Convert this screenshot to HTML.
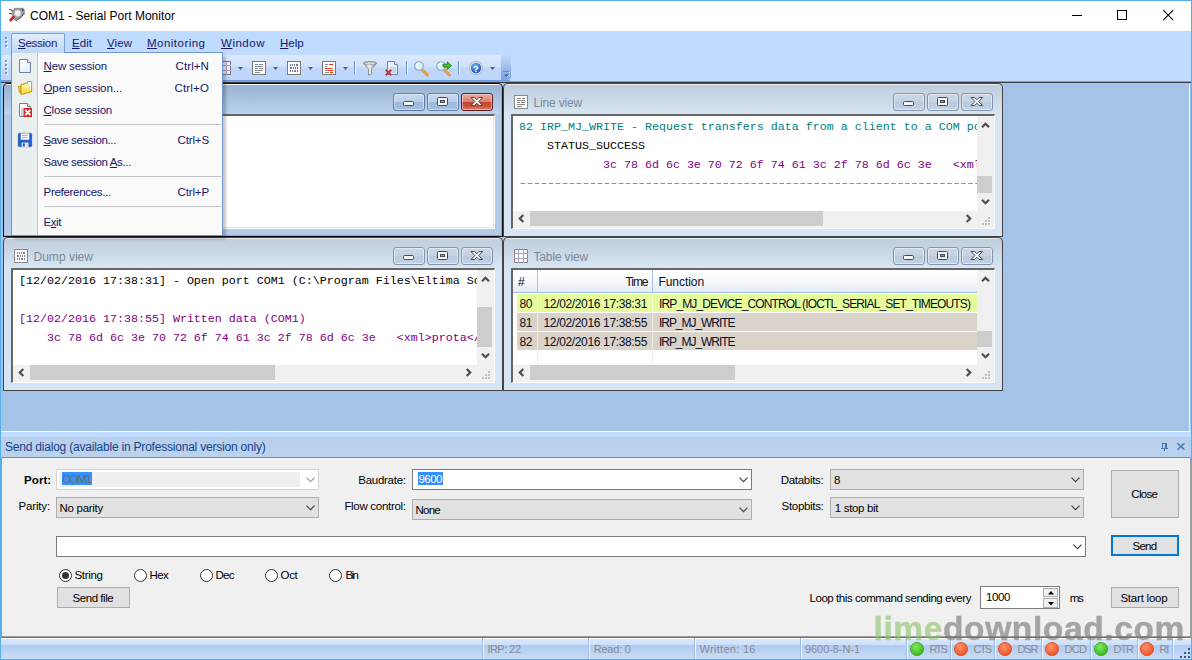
<!DOCTYPE html><html><head><meta charset="utf-8"><title>COM1 - Serial Port Monitor</title><style>
*{box-sizing:border-box;margin:0;padding:0}
html,body{width:1192px;height:660px;overflow:hidden;background:#fff}
body{position:relative;font-family:"Liberation Sans","DejaVu Sans",sans-serif;font-size:12px;color:#000}
.a{position:absolute}
.t{position:absolute;white-space:pre;line-height:16px;height:16px}
.m{position:absolute;white-space:pre;font-family:"Liberation Mono","DejaVu Sans Mono",monospace;font-size:11.67px;line-height:16px;height:16px}
u{text-decoration:underline;text-underline-offset:1px}
svg{position:absolute;overflow:visible}
</style></head><body>
<div class="a" style="left:0px;top:0px;width:1192px;height:660px;background:#56aeea"></div>
<div class="a" style="left:1px;top:1px;width:1190px;height:30px;background:#fff"></div>
<div class="t" style="left:30px;top:7.5px;letter-spacing:0.011px;">COM1 - Serial Port Monitor</div>
<svg style="left:1060px;top:1px" width="131" height="30" viewBox="0 0 131 30" ><g stroke="#000" stroke-width="1" fill="none" shape-rendering="crispEdges"><path d="M12 14.5h10"/><rect x="57.5" y="9.5" width="9" height="9"/></g><path d="M103.200 9.200l10 10M113.200 9.200l-10 10" stroke="#000" stroke-width="1.100" fill="none"/></svg>
<div class="a" style="left:1px;top:31px;width:1190px;height:51px;background:#bfdbff"></div>
<div class="a" style="left:1px;top:81px;width:1190px;height:351px;background:#a5c2e9"></div>
<div class="a" style="left:1px;top:81px;width:1190px;height:1px;background:#9b9b9b"></div>
<div class="a" style="left:1px;top:82px;width:1190px;height:1px;background:#3d3d3d"></div>
<div class="a" style="left:1px;top:432px;width:1190px;height:5px;background:#cfe2fb"></div>
<div class="a" style="left:1px;top:437px;width:1190px;height:20px;background:#b9d1ee"></div>
<div class="a" style="left:1px;top:457px;width:1190px;height:180px;background:#f0f0f0;border-top:1px solid #8a8a8a"></div>
<div class="a" style="left:1px;top:637px;width:1190px;height:22px;background:linear-gradient(#d7e6f9,#c3d9f7 45%,#afcaee 50%,#c6dcf8)"></div>
<div class="a" style="left:6px;top:38px;width:2px;height:2px;background:#fff;opacity:.85"></div>
<div class="a" style="left:5px;top:37px;width:2px;height:2px;background:#6a97d6"></div>
<div class="a" style="left:6px;top:42px;width:2px;height:2px;background:#fff;opacity:.85"></div>
<div class="a" style="left:5px;top:41px;width:2px;height:2px;background:#6a97d6"></div>
<div class="a" style="left:6px;top:46px;width:2px;height:2px;background:#fff;opacity:.85"></div>
<div class="a" style="left:5px;top:45px;width:2px;height:2px;background:#6a97d6"></div>
<div class="a" style="left:11px;top:33px;width:54px;height:20px;border:1px solid #7b9fd3;border-bottom:none;border-radius:2px 2px 0 0;background:linear-gradient(#e3eefb,#bcd6f7)"></div>
<div class="t" style="left:18px;top:34.75px;font-size:11.5px;letter-spacing:-0.275px;color:#15186a;"><u>S</u>ession</div>
<div class="t" style="left:72px;top:34.75px;font-size:11.5px;letter-spacing:0.043px;color:#15186a;"><u>E</u>dit</div>
<div class="t" style="left:107px;top:34.75px;font-size:11.5px;letter-spacing:0.070px;color:#15186a;"><u>V</u>iew</div>
<div class="t" style="left:147px;top:34.75px;font-size:11.5px;letter-spacing:0.480px;color:#15186a;"><u>M</u>onitoring</div>
<div class="t" style="left:221px;top:34.75px;font-size:11.5px;letter-spacing:0.516px;color:#15186a;"><u>W</u>indow</div>
<div class="t" style="left:280px;top:34.75px;font-size:11.5px;letter-spacing:-0.039px;color:#15186a;"><u>H</u>elp</div>
<div class="a" style="left:3px;top:83px;width:500px;height:154px;background:#0d0d0d;border-radius:5px 5px 0 0"></div>
<div class="a" style="left:4px;top:84px;width:498px;height:152px;border-radius:4px 4px 0 0;background:linear-gradient(#fff 0,#fff 1px,#98b2d2 1px,#b9d3ef 30px,#b3cbe9 30px)"></div>
<div class="a" style="left:11px;top:114px;width:484px;height:115px;background:#f0f0f0;border-top:2px solid #666;border-left:2px solid #666;border-right:1px solid #fff;border-bottom:1px solid #fff"></div>
<div class="a" style="left:13px;top:116px;width:464px;height:95px;background:#fff"></div>
<div class="a" style="left:393px;top:93px;width:32px;height:18px;border:1px solid #5f7da6;border-radius:3px;background:linear-gradient(#c6d9ef 0,#bacfe9 47%,#9cb7d8 50%,#a4bfdf 100%);box-shadow:inset 0 0 0 1px rgba(255,255,255,.45)"></div>
<svg style="left:393px;top:93px" width="32" height="18" viewBox="0 0 32 18" ><rect x="10.5" y="8.5" width="10" height="4" rx="1" fill="#f4f4f4" stroke="#474a59" stroke-width="1"/></svg>
<div class="a" style="left:427px;top:93px;width:32px;height:18px;border:1px solid #5f7da6;border-radius:3px;background:linear-gradient(#c6d9ef 0,#bacfe9 47%,#9cb7d8 50%,#a4bfdf 100%);box-shadow:inset 0 0 0 1px rgba(255,255,255,.45)"></div>
<svg style="left:427px;top:93px" width="32" height="18" viewBox="0 0 32 18" ><rect x="10.5" y="4.5" width="10" height="8" rx="1" fill="#f4f4f4" stroke="#474a59" stroke-width="1"/><rect x="13.5" y="7.5" width="4" height="2" fill="#8aa0c0" stroke="#474a59" stroke-width="1"/></svg>
<div class="a" style="left:461px;top:93px;width:32px;height:18px;border:1px solid #5c1c26;border-radius:3px;background:linear-gradient(#eba99c 0,#dd8371 47%,#c3422b 50%,#c8513a 75%,#dc8370 100%);box-shadow:inset 0 0 0 1px rgba(255,255,255,.45)"></div>
<svg style="left:461px;top:93px" width="32" height="18" viewBox="0 0 32 18" ><path d="M10 4.500h3.600l2.200 2.300 2.200-2.300h3.600l-3.900 4 3.900 4h-3.600l-2.200-2.300-2.200 2.300h-3.600l3.900-4z" fill="#f4f4f4" stroke="#474a59" stroke-width="1" stroke-linejoin="round"/></svg>
<div class="a" style="left:13px;top:116px;width:481px;height:112px;background:#fff;border-right:1px solid #e3e3e3;border-bottom:1px solid #e3e3e3"></div>
<div class="a" style="left:4px;top:235px;width:498px;height:1px;background:#35d3ea"></div>
<div class="a" style="left:501px;top:91px;width:1px;height:145px;background:#35d3ea"></div>
<div class="a" style="left:503px;top:83px;width:500px;height:154px;background:#454545;border-radius:5px 5px 0 0"></div>
<div class="a" style="left:504px;top:84px;width:498px;height:152px;border-radius:4px 4px 0 0;background:linear-gradient(#e9eff8 0,#e9eff8 1px,#bfcddc 1px,#d8e5f3 30px,#d7e4f3 30px)"></div>
<div class="a" style="left:511px;top:114px;width:484px;height:115px;background:#f0f0f0;border-top:2px solid #666;border-left:2px solid #666;border-right:1px solid #fff;border-bottom:1px solid #fff"></div>
<div class="a" style="left:513px;top:116px;width:464px;height:95px;background:#fff"></div>
<svg style="left:514px;top:95px" width="14" height="14" viewBox="0 0 14 14"><rect x=".5" y=".5" width="13" height="13" fill="#fdfdfd" stroke="#8a8a8a"/><path d="M3 3.5h4M8 3.5h3M3 5.5h8M3 7.5h3M7 7.5h4M3 9.5h8M3 11.5h5" stroke="#8b8b8b" stroke-width="1" shape-rendering="crispEdges"/></svg>
<div class="t" style="left:533.5px;top:95px;letter-spacing:-0.170px;color:#7c8899;">Line view</div>
<div class="a" style="left:893px;top:93px;width:32px;height:18px;border:1px solid #8495b0;border-radius:3px;background:linear-gradient(#ccd8e7 0,#c5d2e3 47%,#b9c8dc 50%,#c4d2e4 100%);box-shadow:inset 0 0 0 1px rgba(255,255,255,.45)"></div>
<svg style="left:893px;top:93px" width="32" height="18" viewBox="0 0 32 18" ><rect x="10.5" y="8.5" width="10" height="4" rx="1" fill="#f4f4f4" stroke="#474a59" stroke-width="1"/></svg>
<div class="a" style="left:927px;top:93px;width:32px;height:18px;border:1px solid #8495b0;border-radius:3px;background:linear-gradient(#ccd8e7 0,#c5d2e3 47%,#b9c8dc 50%,#c4d2e4 100%);box-shadow:inset 0 0 0 1px rgba(255,255,255,.45)"></div>
<svg style="left:927px;top:93px" width="32" height="18" viewBox="0 0 32 18" ><rect x="10.5" y="4.5" width="10" height="8" rx="1" fill="#f4f4f4" stroke="#474a59" stroke-width="1"/><rect x="13.5" y="7.5" width="4" height="2" fill="#8aa0c0" stroke="#474a59" stroke-width="1"/></svg>
<div class="a" style="left:961px;top:93px;width:32px;height:18px;border:1px solid #8495b0;border-radius:3px;background:linear-gradient(#ccd8e7 0,#c5d2e3 47%,#b9c8dc 50%,#c4d2e4 100%);box-shadow:inset 0 0 0 1px rgba(255,255,255,.45)"></div>
<svg style="left:961px;top:93px" width="32" height="18" viewBox="0 0 32 18" ><path d="M10 4.500h3.600l2.200 2.300 2.200-2.300h3.600l-3.900 4 3.900 4h-3.600l-2.200-2.300-2.200 2.300h-3.600l3.900-4z" fill="#f4f4f4" stroke="#474a59" stroke-width="1" stroke-linejoin="round"/></svg>
<svg style="left:976.5px;top:117px" width="17" height="17" viewBox="0 0 17 17" ><path d="M5 10.300l3.500-3.500 3.500 3.500" fill="none" stroke="#4d4d4d" stroke-width="2.200"/></svg>
<svg style="left:976.5px;top:193px" width="17" height="17" viewBox="0 0 17 17" ><path d="M5 6.700l3.500 3.500 3.500-3.500" fill="none" stroke="#4d4d4d" stroke-width="2.200"/></svg>
<svg style="left:512.5px;top:210px" width="17" height="17" viewBox="0 0 17 17" ><path d="M10.300 5l-3.500 3.500 3.500 3.500" fill="none" stroke="#4d4d4d" stroke-width="2.200"/></svg>
<svg style="left:959.5px;top:210px" width="17" height="17" viewBox="0 0 17 17" ><path d="M6.700 5l3.500 3.500-3.500 3.500" fill="none" stroke="#4d4d4d" stroke-width="2.200"/></svg>
<div class="a" style="left:988px;top:217px;width:2px;height:2px;background:#bfbfbf"></div>
<div class="a" style="left:985px;top:220px;width:2px;height:2px;background:#bfbfbf"></div>
<div class="a" style="left:988px;top:220px;width:2px;height:2px;background:#bfbfbf"></div>
<div class="a" style="left:982px;top:223px;width:2px;height:2px;background:#bfbfbf"></div>
<div class="a" style="left:985px;top:223px;width:2px;height:2px;background:#bfbfbf"></div>
<div class="a" style="left:988px;top:223px;width:2px;height:2px;background:#bfbfbf"></div>
<div class="a" style="left:3px;top:237px;width:500px;height:154px;background:#454545;border-radius:5px 5px 0 0"></div>
<div class="a" style="left:4px;top:238px;width:498px;height:152px;border-radius:4px 4px 0 0;background:linear-gradient(#e9eff8 0,#e9eff8 1px,#bfcddc 1px,#d8e5f3 30px,#d7e4f3 30px)"></div>
<div class="a" style="left:11px;top:268px;width:484px;height:115px;background:#f0f0f0;border-top:2px solid #666;border-left:2px solid #666;border-right:1px solid #fff;border-bottom:1px solid #fff"></div>
<div class="a" style="left:13px;top:270px;width:464px;height:95px;background:#fff"></div>
<svg style="left:14px;top:249px" width="14" height="14" viewBox="0 0 14 14"><rect x=".5" y=".5" width="13" height="13" fill="#fdfdfd" stroke="#8a8a8a"/><path d="M3 3.5h1M5 3.5h1M7 3.5h1M9 3.5h2M3 6.5h2M6 6.5h1M8 6.5h1M10 6.5h1M3 9.5h1M5 9.5h1M7 9.5h2M10 9.5h1" stroke="#7d8794" stroke-width="2" shape-rendering="crispEdges"/></svg>
<div class="t" style="left:33.5px;top:249px;letter-spacing:0.016px;color:#7c8899;">Dump view</div>
<div class="a" style="left:393px;top:247px;width:32px;height:18px;border:1px solid #8495b0;border-radius:3px;background:linear-gradient(#ccd8e7 0,#c5d2e3 47%,#b9c8dc 50%,#c4d2e4 100%);box-shadow:inset 0 0 0 1px rgba(255,255,255,.45)"></div>
<svg style="left:393px;top:247px" width="32" height="18" viewBox="0 0 32 18" ><rect x="10.5" y="8.5" width="10" height="4" rx="1" fill="#f4f4f4" stroke="#474a59" stroke-width="1"/></svg>
<div class="a" style="left:427px;top:247px;width:32px;height:18px;border:1px solid #8495b0;border-radius:3px;background:linear-gradient(#ccd8e7 0,#c5d2e3 47%,#b9c8dc 50%,#c4d2e4 100%);box-shadow:inset 0 0 0 1px rgba(255,255,255,.45)"></div>
<svg style="left:427px;top:247px" width="32" height="18" viewBox="0 0 32 18" ><rect x="10.5" y="4.5" width="10" height="8" rx="1" fill="#f4f4f4" stroke="#474a59" stroke-width="1"/><rect x="13.5" y="7.5" width="4" height="2" fill="#8aa0c0" stroke="#474a59" stroke-width="1"/></svg>
<div class="a" style="left:461px;top:247px;width:32px;height:18px;border:1px solid #8495b0;border-radius:3px;background:linear-gradient(#ccd8e7 0,#c5d2e3 47%,#b9c8dc 50%,#c4d2e4 100%);box-shadow:inset 0 0 0 1px rgba(255,255,255,.45)"></div>
<svg style="left:461px;top:247px" width="32" height="18" viewBox="0 0 32 18" ><path d="M10 4.500h3.600l2.200 2.300 2.200-2.300h3.600l-3.900 4 3.900 4h-3.600l-2.200-2.300-2.200 2.300h-3.600l3.900-4z" fill="#f4f4f4" stroke="#474a59" stroke-width="1" stroke-linejoin="round"/></svg>
<svg style="left:476.5px;top:271px" width="17" height="17" viewBox="0 0 17 17" ><path d="M5 10.300l3.500-3.500 3.500 3.500" fill="none" stroke="#4d4d4d" stroke-width="2.200"/></svg>
<svg style="left:476.5px;top:347px" width="17" height="17" viewBox="0 0 17 17" ><path d="M5 6.700l3.500 3.500 3.500-3.500" fill="none" stroke="#4d4d4d" stroke-width="2.200"/></svg>
<svg style="left:12.5px;top:364px" width="17" height="17" viewBox="0 0 17 17" ><path d="M10.300 5l-3.500 3.500 3.500 3.500" fill="none" stroke="#4d4d4d" stroke-width="2.200"/></svg>
<svg style="left:459.5px;top:364px" width="17" height="17" viewBox="0 0 17 17" ><path d="M6.700 5l3.500 3.500-3.500 3.500" fill="none" stroke="#4d4d4d" stroke-width="2.200"/></svg>
<div class="a" style="left:488px;top:371px;width:2px;height:2px;background:#bfbfbf"></div>
<div class="a" style="left:485px;top:374px;width:2px;height:2px;background:#bfbfbf"></div>
<div class="a" style="left:488px;top:374px;width:2px;height:2px;background:#bfbfbf"></div>
<div class="a" style="left:482px;top:377px;width:2px;height:2px;background:#bfbfbf"></div>
<div class="a" style="left:485px;top:377px;width:2px;height:2px;background:#bfbfbf"></div>
<div class="a" style="left:488px;top:377px;width:2px;height:2px;background:#bfbfbf"></div>
<div class="a" style="left:503px;top:237px;width:500px;height:154px;background:#454545;border-radius:5px 5px 0 0"></div>
<div class="a" style="left:504px;top:238px;width:498px;height:152px;border-radius:4px 4px 0 0;background:linear-gradient(#e9eff8 0,#e9eff8 1px,#bfcddc 1px,#d8e5f3 30px,#d7e4f3 30px)"></div>
<div class="a" style="left:511px;top:268px;width:484px;height:115px;background:#f0f0f0;border-top:2px solid #666;border-left:2px solid #666;border-right:1px solid #fff;border-bottom:1px solid #fff"></div>
<div class="a" style="left:513px;top:270px;width:464px;height:95px;background:#fff"></div>
<svg style="left:514px;top:249px" width="14" height="14" viewBox="0 0 14 14"><rect x=".5" y=".5" width="13" height="13" fill="#fbfbfd" stroke="#8a8a8a"/><path d="M.5 4.5h13M.5 9.5h13M4.5 .5v13M9.5 .5v13" stroke="#a9a0c6" stroke-width="1" shape-rendering="crispEdges"/></svg>
<div class="t" style="left:533.5px;top:249px;letter-spacing:-0.153px;color:#7c8899;">Table view</div>
<div class="a" style="left:893px;top:247px;width:32px;height:18px;border:1px solid #8495b0;border-radius:3px;background:linear-gradient(#ccd8e7 0,#c5d2e3 47%,#b9c8dc 50%,#c4d2e4 100%);box-shadow:inset 0 0 0 1px rgba(255,255,255,.45)"></div>
<svg style="left:893px;top:247px" width="32" height="18" viewBox="0 0 32 18" ><rect x="10.5" y="8.5" width="10" height="4" rx="1" fill="#f4f4f4" stroke="#474a59" stroke-width="1"/></svg>
<div class="a" style="left:927px;top:247px;width:32px;height:18px;border:1px solid #8495b0;border-radius:3px;background:linear-gradient(#ccd8e7 0,#c5d2e3 47%,#b9c8dc 50%,#c4d2e4 100%);box-shadow:inset 0 0 0 1px rgba(255,255,255,.45)"></div>
<svg style="left:927px;top:247px" width="32" height="18" viewBox="0 0 32 18" ><rect x="10.5" y="4.5" width="10" height="8" rx="1" fill="#f4f4f4" stroke="#474a59" stroke-width="1"/><rect x="13.5" y="7.5" width="4" height="2" fill="#8aa0c0" stroke="#474a59" stroke-width="1"/></svg>
<div class="a" style="left:961px;top:247px;width:32px;height:18px;border:1px solid #8495b0;border-radius:3px;background:linear-gradient(#ccd8e7 0,#c5d2e3 47%,#b9c8dc 50%,#c4d2e4 100%);box-shadow:inset 0 0 0 1px rgba(255,255,255,.45)"></div>
<svg style="left:961px;top:247px" width="32" height="18" viewBox="0 0 32 18" ><path d="M10 4.500h3.600l2.200 2.300 2.200-2.300h3.600l-3.900 4 3.900 4h-3.600l-2.200-2.300-2.200 2.300h-3.600l3.900-4z" fill="#f4f4f4" stroke="#474a59" stroke-width="1" stroke-linejoin="round"/></svg>
<svg style="left:976.5px;top:271px" width="17" height="17" viewBox="0 0 17 17" ><path d="M5 10.300l3.500-3.500 3.500 3.500" fill="none" stroke="#4d4d4d" stroke-width="2.200"/></svg>
<svg style="left:976.5px;top:347px" width="17" height="17" viewBox="0 0 17 17" ><path d="M5 6.700l3.500 3.500 3.500-3.500" fill="none" stroke="#4d4d4d" stroke-width="2.200"/></svg>
<svg style="left:512.5px;top:364px" width="17" height="17" viewBox="0 0 17 17" ><path d="M10.300 5l-3.500 3.500 3.500 3.500" fill="none" stroke="#4d4d4d" stroke-width="2.200"/></svg>
<svg style="left:959.5px;top:364px" width="17" height="17" viewBox="0 0 17 17" ><path d="M6.700 5l3.500 3.500-3.500 3.500" fill="none" stroke="#4d4d4d" stroke-width="2.200"/></svg>
<div class="a" style="left:988px;top:371px;width:2px;height:2px;background:#bfbfbf"></div>
<div class="a" style="left:985px;top:374px;width:2px;height:2px;background:#bfbfbf"></div>
<div class="a" style="left:988px;top:374px;width:2px;height:2px;background:#bfbfbf"></div>
<div class="a" style="left:982px;top:377px;width:2px;height:2px;background:#bfbfbf"></div>
<div class="a" style="left:985px;top:377px;width:2px;height:2px;background:#bfbfbf"></div>
<div class="a" style="left:988px;top:377px;width:2px;height:2px;background:#bfbfbf"></div>
<div class="m" style="left:519px;top:118.5px;width:458px;overflow:hidden;color:#008080;font-size:11.67px;letter-spacing:0">82 IRP_MJ_WRITE - Request transfers data from a client to a COM port</div>
<div class="m" style="left:519px;top:137.5px;width:458px;overflow:hidden;color:#000;font-size:11.67px;letter-spacing:0">    STATUS_SUCCESS</div>
<div class="m" style="left:519px;top:156.5px;width:458px;overflow:hidden;color:#800080;font-size:11.67px;letter-spacing:0">            3c 78 6d 6c 3e 70 72 6f 74 61 3c 2f 78 6d 6c 3e   &lt;xml&gt;prota&lt;/xml&gt;</div>
<div class="m" style="left:518px;top:174.500px;width:320.98px;overflow:hidden;color:#808080;font-size:11.67px;letter-spacing:-2.105px;transform:scaleX(1.43);transform-origin:0 0">--------------------------------------------------------------------------------</div>
<div class="a" style="left:977px;top:176px;width:15px;height:17px;background:#cdcdcd"></div>
<div class="a" style="left:530px;top:211px;width:293px;height:15px;background:#cdcdcd"></div>
<div class="m" style="left:19px;top:272.5px;width:458px;overflow:hidden;color:#000;font-size:11.67px;letter-spacing:0">[12/02/2016 17:38:31] - Open port COM1 (C:\Program Files\Eltima Software</div>
<div class="m" style="left:19px;top:310.5px;width:458px;overflow:hidden;color:#800080;font-size:11.67px;letter-spacing:0">[12/02/2016 17:38:55] Written data (COM1)</div>
<div class="m" style="left:19px;top:329.5px;width:458px;overflow:hidden;color:#800080;font-size:11.67px;letter-spacing:0">    3c 78 6d 6c 3e 70 72 6f 74 61 3c 2f 78 6d 6c 3e   &lt;xml&gt;prota&lt;/xml&gt;</div>
<div class="a" style="left:477px;top:307px;width:15px;height:40px;background:#cdcdcd"></div>
<div class="a" style="left:30px;top:365px;width:245px;height:15px;background:#cdcdcd"></div>
<div class="a" style="left:513px;top:270px;width:464px;height:23px;background:linear-gradient(#fff,#f7f9fc 50%,#e3eaf4);border-bottom:1px solid #9dbbe3"></div>
<div class="a" style="left:537px;top:270px;width:1px;height:23px;background:#a9c1e4"></div>
<div class="a" style="left:652px;top:270px;width:1px;height:23px;background:#a9c1e4"></div>
<div class="t" style="left:518px;top:274px;color:#0b0b22;">#</div>
<div class="t" style="left:625.5px;top:274px;letter-spacing:-1.059px;color:#0b0b22;">Time</div>
<div class="t" style="left:658.5px;top:274px;letter-spacing:-0.066px;color:#0b0b22;">Function</div>
<div class="a" style="left:517px;top:294px;width:460px;height:18px;background:#e6fb9b"></div>
<div class="a" style="left:537px;top:294px;width:1px;height:18px;background:rgba(255,255,255,.55)"></div>
<div class="a" style="left:652px;top:294px;width:1px;height:18px;background:rgba(255,255,255,.55)"></div>
<div class="t" style="left:519.5px;top:295.5px;letter-spacing:-0.430px;color:#0b0b22;">80</div>
<div class="t" style="left:543.5px;top:295.5px;letter-spacing:-0.348px;color:#0b0b22;">12/02/2016 17:38:31</div>
<div class="t" style="left:659px;top:295.5px;letter-spacing:-0.870px;color:#0b0b22;">IRP_MJ_DEVICE_CONTROL (IOCTL_SERIAL_SET_TIMEOUTS)</div>
<div class="a" style="left:517px;top:313px;width:460px;height:18px;background:#d9d3c9"></div>
<div class="a" style="left:537px;top:313px;width:1px;height:18px;background:rgba(255,255,255,.55)"></div>
<div class="a" style="left:652px;top:313px;width:1px;height:18px;background:rgba(255,255,255,.55)"></div>
<div class="t" style="left:519.5px;top:314.5px;letter-spacing:-0.430px;color:#0b0b22;">81</div>
<div class="t" style="left:543.5px;top:314.5px;letter-spacing:-0.348px;color:#0b0b22;">12/02/2016 17:38:55</div>
<div class="t" style="left:659px;top:314.5px;letter-spacing:-1.043px;color:#0b0b22;">IRP_MJ_WRITE</div>
<div class="a" style="left:517px;top:332px;width:460px;height:18px;background:#d9d3c9"></div>
<div class="a" style="left:537px;top:332px;width:1px;height:18px;background:rgba(255,255,255,.55)"></div>
<div class="a" style="left:652px;top:332px;width:1px;height:18px;background:rgba(255,255,255,.55)"></div>
<div class="t" style="left:519.5px;top:333.5px;letter-spacing:-0.430px;color:#0b0b22;">82</div>
<div class="t" style="left:543.5px;top:333.5px;letter-spacing:-0.348px;color:#0b0b22;">12/02/2016 17:38:55</div>
<div class="t" style="left:659px;top:333.5px;letter-spacing:-1.043px;color:#0b0b22;">IRP_MJ_WRITE</div>
<div class="a" style="left:537px;top:350px;width:1px;height:15px;background:#ededed"></div>
<div class="a" style="left:652px;top:350px;width:1px;height:15px;background:#ededed"></div>
<div class="a" style="left:977px;top:331px;width:15px;height:16px;background:#cdcdcd"></div>
<div class="a" style="left:530px;top:365px;width:205px;height:15px;background:#cdcdcd"></div>
<div class="a" style="left:2px;top:55px;width:499px;height:25px;background:linear-gradient(#dde9fc,#cfe1fb 45%,#c0d7f9 55%,#bdd5f9);border-radius:2px 0 3px 0"></div>
<div class="a" style="left:1px;top:80px;width:509px;height:1px;background:#6f9ce0;border-radius:0 0 3px 0"></div>
<div class="a" style="left:501px;top:55px;width:10px;height:25px;background:linear-gradient(#c3d8f8,#a3c1f0 45%,#86abe6 75%,#7fa5e3);border-radius:0 4px 4px 0"></div>
<div class="a" style="left:6px;top:61px;width:2px;height:2px;background:#fff;opacity:.85"></div>
<div class="a" style="left:5px;top:60px;width:2px;height:2px;background:#6a97d6"></div>
<div class="a" style="left:6px;top:65px;width:2px;height:2px;background:#fff;opacity:.85"></div>
<div class="a" style="left:5px;top:64px;width:2px;height:2px;background:#6a97d6"></div>
<div class="a" style="left:6px;top:69px;width:2px;height:2px;background:#fff;opacity:.85"></div>
<div class="a" style="left:5px;top:68px;width:2px;height:2px;background:#6a97d6"></div>
<div class="a" style="left:6px;top:73px;width:2px;height:2px;background:#fff;opacity:.85"></div>
<div class="a" style="left:5px;top:72px;width:2px;height:2px;background:#6a97d6"></div>
<svg style="left:217px;top:61px" width="14" height="14" viewBox="0 0 14 14" ><rect x=".5" y=".5" width="13" height="13" fill="#efeefb" stroke="#7a7a7a"/><path d="M.5 4.5h13M.5 9.5h13M4.5 .5v13M9.5 .5v13" stroke="#aba2ca" shape-rendering="crispEdges"/></svg>
<svg style="left:238px;top:67px" width="5" height="3" viewBox="0 0 5 3" ><path d="M0 0h5l-2.5 3z" fill="#3f63a3"/></svg>
<svg style="left:252px;top:61px" width="14" height="14" viewBox="0 0 14 14" ><rect x=".5" y=".5" width="13" height="13" fill="#fdfdfd" stroke="#7a7a7a"/><path d="M3 3.5h3M3 7.5h3" stroke="#5f8fd0" shape-rendering="crispEdges"/><path d="M7 3.5h4M3 5.5h8M7 7.5h4M3 9.5h8M3 11.5h5" stroke="#8b8b8b" shape-rendering="crispEdges"/></svg>
<svg style="left:273px;top:67px" width="5" height="3" viewBox="0 0 5 3" ><path d="M0 0h5l-2.5 3z" fill="#3f63a3"/></svg>
<svg style="left:287px;top:61px" width="14" height="14" viewBox="0 0 14 14" ><rect x=".5" y=".5" width="13" height="13" fill="#fdfdfd" stroke="#7a7a7a"/><path d="M3 4h1M5 4h1M7 4h1M9 4h2M3 7h2M6 7h1M8 7h1M10 7h1M3 10h1M5 10h1M7 10h2M10 10h1" stroke="#6f7c8f" stroke-width="2" shape-rendering="crispEdges"/></svg>
<svg style="left:308px;top:67px" width="5" height="3" viewBox="0 0 5 3" ><path d="M0 0h5l-2.5 3z" fill="#3f63a3"/></svg>
<svg style="left:322px;top:61px" width="14" height="14" viewBox="0 0 14 14" ><rect x=".5" y=".5" width="13" height="13" fill="#fdfdfd" stroke="#7a7a7a"/><path d="M3 3.5h3M3 5.5h2M6 7.5h5M3 9.5h3M3 11.5h4" stroke="#8b8b8b" shape-rendering="crispEdges"/><path d="M7 3.5h4M3 7.5h6M6 9.5h5M8 11.5h3" stroke="#f03a17" stroke-width="1.3" shape-rendering="crispEdges"/></svg>
<svg style="left:343px;top:67px" width="5" height="3" viewBox="0 0 5 3" ><path d="M0 0h5l-2.5 3z" fill="#3f63a3"/></svg>
<div class="a" style="left:354px;top:61px;width:1px;height:14px;background:#6d95d2"></div>
<div class="a" style="left:355px;top:61px;width:1px;height:14px;background:rgba(255,255,255,.7)"></div>
<svg style="left:363px;top:61px" width="14" height="14" viewBox="0 0 14 14" ><defs><linearGradient id="fg" x1="0" x2="1"><stop offset="0" stop-color="#8d8d8d"/><stop offset=".45" stop-color="#f2f2f2"/><stop offset="1" stop-color="#7e7e7e"/></linearGradient></defs><path d="M.5 2.2C.5 1 3.5 .5 7 .5s6.500 .5 6.500 1.700c0 1-3.800 4.300-5 5.600V13l-3 1V7.800C4.300 6.500 .5 3.200 .5 2.200z" fill="url(#fg)" stroke="#777" stroke-width=".7"/><ellipse cx="7" cy="2.300" rx="5.600" ry="1.300" fill="#d9d9d9" stroke="#8c8c8c" stroke-width=".5"/></svg>
<svg style="left:385px;top:61px" width="14" height="14" viewBox="0 0 14 14" ><path d="M2.500 .5h7l3 3v10h-10z" fill="#e8eefb" stroke="#6e82ab"/><path d="M9.500 .5v3h3" fill="#fff" stroke="#6e82ab"/><rect x="5" y="6" width="6" height="6" fill="#c9d5ee"/><path d="M.8 8.800l5.400 5.400M6.200 8.800L.8 14.200" stroke="#d8321c" stroke-width="2"/></svg>
<div class="a" style="left:406px;top:61px;width:1px;height:14px;background:#6d95d2"></div>
<div class="a" style="left:407px;top:61px;width:1px;height:14px;background:rgba(255,255,255,.7)"></div>
<svg style="left:414px;top:60.5px" width="16" height="15" viewBox="0 0 16 15" ><path d="M7.500 8l6 6" stroke="#e58a1f" stroke-width="2.600" stroke-linecap="round"/><path d="M7.700 8.200l5.600 5.600" stroke="#f9c27a" stroke-width=".9" stroke-linecap="round"/><circle cx="5" cy="5" r="4.300" fill="#dff2fb" stroke="#7ea3c8" stroke-width="1.100"/><path d="M2.500 4.500a2.800 2.800 0 0 1 3-2.300" stroke="#fff" stroke-width="1.200" fill="none"/></svg>
<svg style="left:436px;top:60.5px" width="16" height="15" viewBox="0 0 16 15" ><path d="M7.500 8l6 6" stroke="#e58a1f" stroke-width="2.600" stroke-linecap="round"/><path d="M7.700 8.200l5.600 5.600" stroke="#f9c27a" stroke-width=".9" stroke-linecap="round"/><circle cx="5" cy="5" r="4.300" fill="#dff2fb" stroke="#7ea3c8" stroke-width="1.100"/><path d="M2.500 4.500a2.800 2.800 0 0 1 3-2.300" stroke="#fff" stroke-width="1.200" fill="none"/><path d="M7 3.200h4.300V.8L15.500 4.600 11.300 8.400V6H7z" fill="#3fc21f" stroke="#1c7d0d" stroke-width=".8" stroke-linejoin="round"/></svg>
<div class="a" style="left:458px;top:61px;width:1px;height:14px;background:#6d95d2"></div>
<div class="a" style="left:459px;top:61px;width:1px;height:14px;background:rgba(255,255,255,.7)"></div>
<svg style="left:469px;top:61px" width="14" height="14" viewBox="0 0 14 14" ><defs><radialGradient id="hg" cx=".4" cy=".3" r=".8"><stop offset="0" stop-color="#7db7f5"/><stop offset=".6" stop-color="#2c6fd6"/><stop offset="1" stop-color="#1a4fae"/></radialGradient></defs><circle cx="7" cy="7" r="6.700" fill="#e6e6e6" stroke="#9a9a9a" stroke-width=".6"/><circle cx="7" cy="7" r="5.200" fill="url(#hg)"/><text x="7" y="10.600" text-anchor="middle" font-family="Liberation Sans,sans-serif" font-weight="bold" font-size="9.500" fill="#fff">?</text></svg>
<svg style="left:490px;top:67px" width="5" height="3" viewBox="0 0 5 3" ><path d="M0 0h5l-2.5 3z" fill="#3f63a3"/></svg>
<svg style="left:503px;top:72px" width="7" height="6" viewBox="0 0 7 6" ><path d="M0 .5h7" stroke="#fff"/><path d="M0 0h6" stroke="#3f63a3" stroke-width="1"/><path d="M1 2.500h5l-2.500 3z" fill="#3f63a3"/><path d="M3.800 5.500L6.500 2.800" stroke="#fff" stroke-width=".8"/></svg>
<div class="a" style="left:14px;top:56px;width:212px;height:183px;background:rgba(0,0,0,.22);filter:blur(1.500px)"></div>
<div class="a" style="left:11px;top:52px;width:212px;height:184px;background:#fafafa;border:1px solid #6f94d0"></div>
<div class="a" style="left:12px;top:53px;width:25px;height:182px;background:#e9eeee"></div>
<div class="a" style="left:37px;top:53px;width:1px;height:182px;background:#c5c5c5"></div>
<div class="a" style="left:12px;top:52px;width:52px;height:1px;background:#bfd8f7"></div>
<div class="t" style="left:43.5px;top:57.75px;font-size:11.5px;letter-spacing:-0.155px;color:#15186a;"><u>N</u>ew session</div>
<div class="t" style="left:175.5px;top:57.75px;font-size:11.5px;letter-spacing:0.099px;color:#15186a;">Ctrl+N</div>
<div class="t" style="left:43.5px;top:79.75px;font-size:11.5px;letter-spacing:-0.094px;color:#15186a;"><u>O</u>pen session...</div>
<div class="t" style="left:174.5px;top:79.75px;font-size:11.5px;letter-spacing:0.159px;color:#15186a;">Ctrl+O</div>
<div class="t" style="left:43.5px;top:101.75px;font-size:11.5px;letter-spacing:-0.238px;color:#15186a;"><u>C</u>lose session</div>
<div class="t" style="left:43.5px;top:131.75px;font-size:11.5px;letter-spacing:-0.366px;color:#15186a;"><u>S</u>ave session...</div>
<div class="t" style="left:177.5px;top:131.75px;font-size:11.5px;letter-spacing:-0.130px;color:#15186a;">Ctrl+S</div>
<div class="t" style="left:43.5px;top:153.75px;font-size:11.5px;letter-spacing:-0.359px;color:#15186a;">Save session <u>A</u>s...</div>
<div class="t" style="left:43.5px;top:183.75px;font-size:11.5px;letter-spacing:-0.292px;color:#15186a;">Preferences...</div>
<div class="t" style="left:177.5px;top:183.75px;font-size:11.5px;letter-spacing:-0.130px;color:#15186a;">Ctrl+P</div>
<div class="t" style="left:43.5px;top:213.75px;font-size:11.5px;letter-spacing:-0.418px;color:#15186a;">E<u>x</u>it</div>
<div class="a" style="left:44px;top:124px;width:177px;height:1px;background:#c5c5c5"></div>
<div class="a" style="left:44px;top:176px;width:177px;height:1px;background:#c5c5c5"></div>
<div class="a" style="left:44px;top:206px;width:177px;height:1px;background:#c5c5c5"></div>
<svg style="left:19px;top:59px" width="12" height="14" viewBox="0 0 12 14" ><defs><linearGradient id="dg" x1="0" y1="0" x2="1" y2="1"><stop offset="0" stop-color="#fff"/><stop offset="1" stop-color="#dfe9fa"/></linearGradient></defs><path d="M.5 .5h8l3 3v10h-11z" fill="url(#dg)" stroke="#6b7fa6"/><path d="M8.500 .5v3h3" fill="#fff" stroke="#6b7fa6"/></svg>
<svg style="left:18px;top:81px" width="14" height="14" viewBox="0 0 14 14" ><defs><linearGradient id="fo" x1="0" y1="0" x2="0" y2="1"><stop offset="0" stop-color="#fffdf0"/><stop offset=".35" stop-color="#fdf0a0"/><stop offset="1" stop-color="#f6d42c"/></linearGradient></defs><path d="M.4 5.400H3V12.300L1.400 11.500z" fill="#f3cf55" stroke="#c8960c" stroke-width=".9" stroke-linejoin="round"/><path d="M3 3.300H6.200V2.300H9.400V.5H13.600V10.800L3 13.500z" fill="url(#fo)" stroke="#c8960c" stroke-width="1" stroke-linejoin="round"/><path d="M10.300 1.400H12.700V8.500" fill="none" stroke="#fff" stroke-width="1" opacity=".8"/></svg>
<svg style="left:19px;top:103px" width="13" height="14" viewBox="0 0 13 14" ><path d="M.5 .5h8l3 3v10h-11z" fill="#fff" stroke="#6b7fa6"/><path d="M8.500 .5v3h3" fill="#fff" stroke="#6b7fa6"/><rect x="2" y="5" width="2" height="8" fill="#c5d5f2"/><rect x="4.500" y="5" width="8.500" height="9" fill="#d9281f"/><path d="M6.300 7l5 5M11.300 7l-5 5" stroke="#fff" stroke-width="1.800"/></svg>
<svg style="left:18px;top:133px" width="14" height="14" viewBox="0 0 14 14" ><rect x=".3" y=".3" width="13.400" height="13.400" rx="1.300" fill="#1f5fd0" stroke="#1746a8" stroke-width=".6"/><rect x="2.700" y=".3" width="8.600" height="6.500" fill="#f4f4f4"/><path d="M4 2.500h6M4 4.500h5" stroke="#b9b9b9"/><rect x="3.500" y="9.500" width="7" height="4.500" fill="#e2e2e2"/><rect x="4.800" y="10.300" width="2" height="3.200" fill="#1f5fd0"/></svg>
<svg style="left:7px;top:7px" width="18" height="16" viewBox="0 0 18 16" ><path d="M2 2.300l2.200 .5 1.200 1.400h2.400M2 6.600l2.200-.2 1.600 1" fill="none" stroke="#6b6b6b" stroke-width="1.200"/><path d="M7.500 1.300H15.800L17.300 3V6.500L14 10.500 9 13.700 6.800 12 5.600 6z" fill="#9c9c9c" stroke="#767676" stroke-width=".7"/><path d="M17.300 6.800L9.300 13.900" stroke="#4f4f4f" stroke-width="1.400" stroke-dasharray="1 1"/><circle cx="10.700" cy="6.300" r="3.200" fill="#eef2f5" stroke="#c4c4c4" stroke-width=".8"/><rect x="15" y="1.800" width="1.600" height="2.200" fill="#2b4f8f"/><path d="M6.300 10L3.700 13.100" stroke="#c91d1d" stroke-width="2.700" stroke-linecap="round"/></svg>
<div class="a" style="left:1px;top:431px;width:1190px;height:2px;background:linear-gradient(#f4f8fe,#fff)"></div>
<div class="a" style="left:1px;top:432px;width:1190px;height:5px;background:#bfdbff"></div>
<div class="a" style="left:1px;top:437px;width:1190px;height:20px;background:linear-gradient(#b8cfeb,#bad2ee)"></div>
<div class="t" style="left:5px;top:439px;letter-spacing:-0.212px;color:#15428b;">Send dialog (available in Professional version only)</div>
<svg style="left:1161px;top:443px" width="7" height="8" viewBox="0 0 7 8" ><path d="M1.500 .5h4v5h-4z" fill="none" stroke="#4b76b5" stroke-width="1" shape-rendering="crispEdges"/><path d="M4.500 .5v5" stroke="#4b76b5" stroke-width="1" shape-rendering="crispEdges"/><path d="M0 5.500h7M3.500 6v2" stroke="#4b76b5" stroke-width="1" shape-rendering="crispEdges"/></svg>
<svg style="left:1177px;top:443px" width="8" height="7" viewBox="0 0 8 7" ><path d="M.5 .3l7 6.400M7.500 .3l-7 6.400" stroke="#4b76b5" stroke-width="1.500"/></svg>
<div class="a" style="left:1189px;top:84px;width:1px;height:347px;background:#f4f8fe"></div>
<div class="a" style="left:1190px;top:457px;width:1px;height:180px;background:#9f9f9f"></div>
<div class="t" style="left:24px;top:471.5px;font-size:11.5px;font-weight:bold;letter-spacing:0.091px;">Port:</div>
<div class="t" style="left:18.5px;top:498px;font-size:11.5px;letter-spacing:-0.156px;">Parity:</div>
<div class="a" style="left:56px;top:469px;width:263px;height:21px;background:#fff;border:1px solid #d4d4d4"></div>
<div class="a" style="left:59px;top:472px;width:241px;height:15px;background:#efefef"></div>
<svg style="left:306px;top:477.0px" width="9" height="6" viewBox="0 0 9 6" ><path d="M.5 .7l4 4 4-4" fill="none" stroke="#9d9d9d" stroke-width="1.200"/></svg>
<div class="a" style="left:62px;top:472px;width:30px;height:13px;background:#3390ff"></div>
<div class="t" style="left:62.5px;top:471px;font-size:11.5px;letter-spacing:-1.309px;color:#6d6d6d;">COM1</div>
<div class="a" style="left:56px;top:497px;width:263px;height:21px;background:#e1e1e1;border:1px solid #adadad"></div>
<svg style="left:306px;top:505.0px" width="9" height="6" viewBox="0 0 9 6" ><path d="M.5 .7l4 4 4-4" fill="none" stroke="#444" stroke-width="1.200"/></svg>
<div class="t" style="left:59.5px;top:500px;font-size:11.5px;letter-spacing:-0.281px;">No parity</div>
<div class="t" style="left:358.3px;top:471.5px;font-size:11.5px;letter-spacing:-0.275px;">Baudrate:</div>
<div class="t" style="left:344.4px;top:498px;font-size:11.5px;letter-spacing:-0.299px;">Flow control:</div>
<div class="a" style="left:412px;top:469px;width:340px;height:21px;background:#fff;border:1px solid #7a7a7a"></div>
<svg style="left:739px;top:477.0px" width="9" height="6" viewBox="0 0 9 6" ><path d="M.5 .7l4 4 4-4" fill="none" stroke="#444" stroke-width="1.200"/></svg>
<div class="a" style="left:418px;top:472px;width:25px;height:13px;background:#3390ff"></div>
<div class="t" style="left:418.5px;top:471px;font-size:11.5px;letter-spacing:-0.523px;color:#fff;">9600</div>
<div class="a" style="left:412px;top:499px;width:340px;height:21px;background:#e1e1e1;border:1px solid #adadad"></div>
<svg style="left:739px;top:507.0px" width="9" height="6" viewBox="0 0 9 6" ><path d="M.5 .7l4 4 4-4" fill="none" stroke="#444" stroke-width="1.200"/></svg>
<div class="t" style="left:415.5px;top:501.7px;font-size:11.5px;letter-spacing:-0.750px;">None</div>
<div class="t" style="left:780.7px;top:471.5px;font-size:11.5px;letter-spacing:-0.288px;">Databits:</div>
<div class="t" style="left:781.6px;top:498px;font-size:11.5px;letter-spacing:-0.317px;">Stopbits:</div>
<div class="a" style="left:830px;top:469px;width:254px;height:21px;background:#e1e1e1;border:1px solid #adadad"></div>
<svg style="left:1071px;top:477.0px" width="9" height="6" viewBox="0 0 9 6" ><path d="M.5 .7l4 4 4-4" fill="none" stroke="#444" stroke-width="1.200"/></svg>
<div class="t" style="left:834px;top:471.7px;font-size:11.5px;">8</div>
<div class="a" style="left:830px;top:497px;width:254px;height:21px;background:#e1e1e1;border:1px solid #adadad"></div>
<svg style="left:1071px;top:505.0px" width="9" height="6" viewBox="0 0 9 6" ><path d="M.5 .7l4 4 4-4" fill="none" stroke="#444" stroke-width="1.200"/></svg>
<div class="t" style="left:834.8px;top:500px;font-size:11.5px;letter-spacing:-0.327px;">1 stop bit</div>
<div class="a" style="left:1111px;top:470px;width:68px;height:48px;background:#e1e1e1;border:1px solid #adadad"></div>
<div class="t" style="left:1131.3px;top:486.25px;font-size:11.5px;letter-spacing:-0.701px;">Close</div>
<div class="a" style="left:56px;top:536px;width:1030px;height:21px;background:#fff;border:1px solid #7a7a7a"></div>
<svg style="left:1073px;top:544.0px" width="9" height="6" viewBox="0 0 9 6" ><path d="M.5 .7l4 4 4-4" fill="none" stroke="#444" stroke-width="1.200"/></svg>
<div class="a" style="left:1111px;top:535px;width:68px;height:21px;background:#e1e1e1;border:2px solid #0078d7"></div>
<div class="t" style="left:1132.5px;top:537.75px;font-size:11.5px;letter-spacing:-0.765px;">Send</div>
<div class="a" style="left:59.0px;top:568.5px;width:13px;height:13px;border:1px solid #333;border-radius:50%;background:#fff"></div>
<div class="a" style="left:62.0px;top:571.5px;width:7px;height:7px;border-radius:50%;background:#333"></div>
<div class="t" style="left:74.5px;top:567.2px;font-size:11.5px;letter-spacing:-0.341px;">String</div>
<div class="a" style="left:134.0px;top:568.5px;width:13px;height:13px;border:1px solid #333;border-radius:50%;background:#fff"></div>
<div class="t" style="left:149.5px;top:567.2px;font-size:11.5px;letter-spacing:-0.551px;">Hex</div>
<div class="a" style="left:200.0px;top:568.5px;width:13px;height:13px;border:1px solid #333;border-radius:50%;background:#fff"></div>
<div class="t" style="left:215.5px;top:567.2px;font-size:11.5px;letter-spacing:-0.718px;">Dec</div>
<div class="a" style="left:265.0px;top:568.5px;width:13px;height:13px;border:1px solid #333;border-radius:50%;background:#fff"></div>
<div class="t" style="left:280.5px;top:567.2px;font-size:11.5px;letter-spacing:-0.297px;">Oct</div>
<div class="a" style="left:328.5px;top:568.5px;width:13px;height:13px;border:1px solid #333;border-radius:50%;background:#fff"></div>
<div class="t" style="left:345.5px;top:567.2px;font-size:11.5px;letter-spacing:-1.608px;">Bin</div>
<div class="a" style="left:57px;top:587px;width:73px;height:21px;background:#e1e1e1;border:1px solid #adadad"></div>
<div class="t" style="left:72.5px;top:589.75px;font-size:11.5px;letter-spacing:-0.441px;">Send file</div>
<div class="t" style="left:809.5px;top:590px;font-size:11.5px;letter-spacing:-0.441px;">Loop this command sending every</div>
<div class="a" style="left:980px;top:586px;width:80px;height:23px;background:#fff;border:1px solid #7a7a7a"></div>
<div class="t" style="left:986px;top:588.5px;font-size:11.5px;letter-spacing:-0.398px;">1000</div>
<div class="a" style="left:1043px;top:588px;width:15px;height:9px;background:#f0f0f0;border:1px solid #adadad"></div>
<div class="a" style="left:1043px;top:598px;width:15px;height:10px;background:#f0f0f0;border:1px solid #adadad"></div>
<svg style="left:1047.5px;top:590.5px" width="6" height="4" viewBox="0 0 6 4" ><path d="M0 3.500l3-3.500 3 3.500z" fill="#000"/></svg>
<svg style="left:1047.5px;top:601.5px" width="6" height="4" viewBox="0 0 6 4" ><path d="M0 0l3 3.500 3-3.500z" fill="#000"/></svg>
<div class="t" style="left:1069.7px;top:590px;font-size:11.5px;letter-spacing:-1.272px;">ms</div>
<div class="a" style="left:1111px;top:587px;width:68px;height:21px;background:#e1e1e1;border:1px solid #adadad"></div>
<div class="t" style="left:1120.4px;top:589.75px;font-size:11.5px;letter-spacing:-0.213px;">Start loop</div>
<div class="a" style="left:1px;top:636px;width:1190px;height:1px;background:#9d9d9d"></div>
<div class="a" style="left:1px;top:457px;width:1px;height:180px;background:#9d9d9d"></div>
<div class="a" style="left:1px;top:637px;width:1190px;height:1px;background:#5079b1"></div>
<div class="a" style="left:1px;top:638px;width:1190px;height:21px;background:linear-gradient(#fff 0,#fff 1px,#d9e7fb 1px,#cddff8 7px,#afcbf2 7px,#b9d2f4 13px,#c9ddf8 21px)"></div>
<div class="a" style="left:482px;top:638px;width:1px;height:21px;background:#9dbbe6"></div>
<div class="a" style="left:483px;top:638px;width:1px;height:21px;background:rgba(255,255,255,.8)"></div>
<div class="a" style="left:588px;top:638px;width:1px;height:21px;background:#9dbbe6"></div>
<div class="a" style="left:589px;top:638px;width:1px;height:21px;background:rgba(255,255,255,.8)"></div>
<div class="a" style="left:694px;top:638px;width:1px;height:21px;background:#9dbbe6"></div>
<div class="a" style="left:695px;top:638px;width:1px;height:21px;background:rgba(255,255,255,.8)"></div>
<div class="a" style="left:800px;top:638px;width:1px;height:21px;background:#9dbbe6"></div>
<div class="a" style="left:801px;top:638px;width:1px;height:21px;background:rgba(255,255,255,.8)"></div>
<div class="a" style="left:906px;top:638px;width:1px;height:21px;background:#9dbbe6"></div>
<div class="a" style="left:907px;top:638px;width:1px;height:21px;background:rgba(255,255,255,.8)"></div>
<div class="a" style="left:950px;top:638px;width:1px;height:21px;background:#9dbbe6"></div>
<div class="a" style="left:951px;top:638px;width:1px;height:21px;background:rgba(255,255,255,.8)"></div>
<div class="a" style="left:994px;top:638px;width:1px;height:21px;background:#9dbbe6"></div>
<div class="a" style="left:995px;top:638px;width:1px;height:21px;background:rgba(255,255,255,.8)"></div>
<div class="a" style="left:1041px;top:638px;width:1px;height:21px;background:#9dbbe6"></div>
<div class="a" style="left:1042px;top:638px;width:1px;height:21px;background:rgba(255,255,255,.8)"></div>
<div class="a" style="left:1090px;top:638px;width:1px;height:21px;background:#9dbbe6"></div>
<div class="a" style="left:1091px;top:638px;width:1px;height:21px;background:rgba(255,255,255,.8)"></div>
<div class="a" style="left:1137px;top:638px;width:1px;height:21px;background:#9dbbe6"></div>
<div class="a" style="left:1138px;top:638px;width:1px;height:21px;background:rgba(255,255,255,.8)"></div>
<div class="a" style="left:1172px;top:638px;width:1px;height:21px;background:#9dbbe6"></div>
<div class="a" style="left:1173px;top:638px;width:1px;height:21px;background:rgba(255,255,255,.8)"></div>
<div class="t" style="left:487.4px;top:641.3px;font-size:11px;letter-spacing:-0.512px;color:#8b8a8f;">IRP: 22</div>
<div class="t" style="left:593.75px;top:641.3px;font-size:11px;letter-spacing:-0.219px;color:#8b8a8f;">Read: 0</div>
<div class="t" style="left:699.5px;top:641.3px;font-size:11px;letter-spacing:0.295px;color:#8b8a8f;">Written: 16</div>
<div class="t" style="left:805px;top:641.3px;font-size:11px;letter-spacing:-0.064px;color:#8b8a8f;">9600-8-N-1</div>
<svg width="0" height="0" style="left:0;top:0"><defs><radialGradient id="lg" cx=".42" cy=".35" r=".75"><stop offset="0" stop-color="#84e85f"/><stop offset=".7" stop-color="#46c02a"/><stop offset="1" stop-color="#2fa01c"/></radialGradient><radialGradient id="lr" cx=".42" cy=".35" r=".75"><stop offset="0" stop-color="#ff936a"/><stop offset=".7" stop-color="#f25f33"/><stop offset="1" stop-color="#e04519"/></radialGradient></defs></svg>
<svg style="left:909.75px;top:642px" width="14" height="14" viewBox="0 0 14 14" ><circle cx="7" cy="7" r="6.600" fill="url(#lg)" stroke="#36a81f" stroke-width=".8"/></svg>
<div class="t" style="left:929.4px;top:641.3px;font-size:11px;letter-spacing:-1.638px;color:#8b8a8f;">RTS</div>
<svg style="left:954px;top:642px" width="14" height="14" viewBox="0 0 14 14" ><circle cx="7" cy="7" r="6.600" fill="url(#lr)" stroke="#e2491f" stroke-width=".8"/></svg>
<div class="t" style="left:973.5px;top:641.3px;font-size:11px;letter-spacing:-1.733px;color:#8b8a8f;">CTS</div>
<svg style="left:998px;top:642px" width="14" height="14" viewBox="0 0 14 14" ><circle cx="7" cy="7" r="6.600" fill="url(#lr)" stroke="#e2491f" stroke-width=".8"/></svg>
<div class="t" style="left:1017.5px;top:641.3px;font-size:11px;letter-spacing:-1.078px;color:#8b8a8f;">DSR</div>
<svg style="left:1045px;top:642px" width="14" height="14" viewBox="0 0 14 14" ><circle cx="7" cy="7" r="6.600" fill="url(#lr)" stroke="#e2491f" stroke-width=".8"/></svg>
<div class="t" style="left:1064.5px;top:641.3px;font-size:11px;letter-spacing:-0.748px;color:#8b8a8f;">DCD</div>
<svg style="left:1094px;top:642px" width="14" height="14" viewBox="0 0 14 14" ><circle cx="7" cy="7" r="6.600" fill="url(#lg)" stroke="#36a81f" stroke-width=".8"/></svg>
<div class="t" style="left:1113.6px;top:641.3px;font-size:11px;letter-spacing:-1.153px;color:#8b8a8f;">DTR</div>
<svg style="left:1140px;top:642px" width="14" height="14" viewBox="0 0 14 14" ><circle cx="7" cy="7" r="6.600" fill="url(#lr)" stroke="#e2491f" stroke-width=".8"/></svg>
<div class="t" style="left:1159.5px;top:641.3px;font-size:11px;letter-spacing:-1.250px;color:#8b8a8f;">RI</div>
<div class="a" style="left:1188px;top:648px;width:2px;height:2px;background:#3a5488"></div>
<div class="a" style="left:1184px;top:652px;width:2px;height:2px;background:#3a5488"></div>
<div class="a" style="left:1188px;top:652px;width:2px;height:2px;background:#3a5488"></div>
<div class="a" style="left:1180px;top:656px;width:2px;height:2px;background:#3a5488"></div>
<div class="a" style="left:1184px;top:656px;width:2px;height:2px;background:#3a5488"></div>
<div class="a" style="left:1188px;top:656px;width:2px;height:2px;background:#3a5488"></div>
<div class="a" style="left:873.5px;top:609px;font-size:33.5px;line-height:40px;height:40px;font-weight:bold;white-space:pre;letter-spacing:.62px;-webkit-text-stroke:.5px;opacity:.6"><span style="color:#89c167;-webkit-text-stroke-color:#89c167">lime</span><span style="color:#737373;-webkit-text-stroke-color:#737373">download.com</span></div>
</body></html>
